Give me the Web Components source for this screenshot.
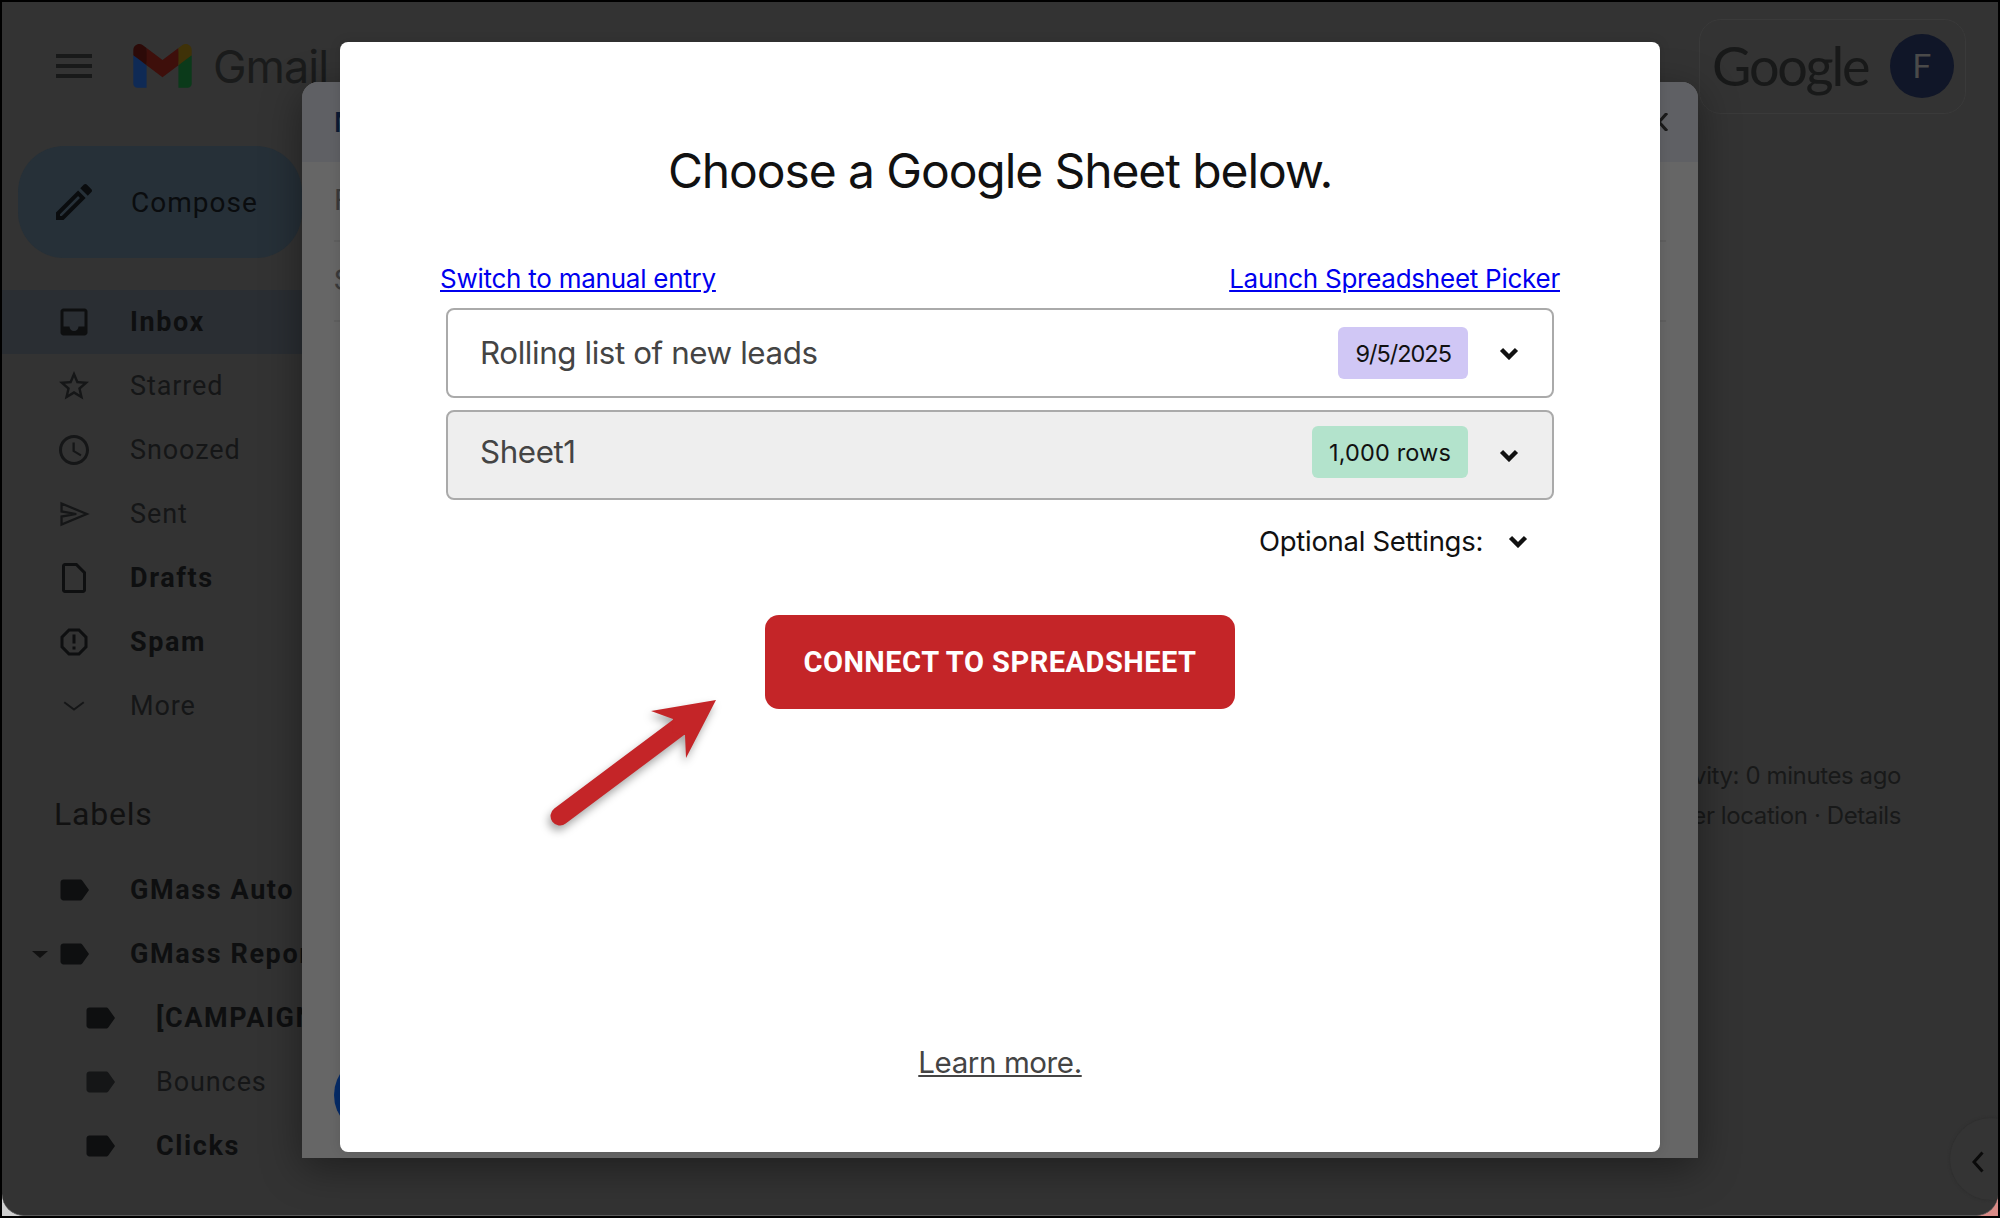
<!DOCTYPE html>
<html lang="en">
  <head>
    <meta charset="UTF-8" />
    <title>Choose a Google Sheet</title>
    <style>
      html, body { margin: 0; height: 100%; }
      body { font-family: "Roboto", "Liberation Sans", sans-serif; background: #000; }
    </style>
  </head>

  <body>
    <mail-window>
      <mail-topbar slot="top"></mail-topbar>
      <mail-sidebar slot="side">
        <nav-item icon="inbox" active bold>Inbox</nav-item>
        <nav-item icon="star">Starred</nav-item>
        <nav-item icon="clock">Snoozed</nav-item>
        <nav-item icon="sent">Sent</nav-item>
        <nav-item icon="draft" bold>Drafts</nav-item>
        <nav-item icon="spam" bold>Spam</nav-item>
        <nav-item icon="more">More</nav-item>
        <label-heading>Labels</label-heading>
        <nav-item icon="label" bold>GMass Auto</nav-item>
        <nav-item icon="label" bold caret>GMass Reports</nav-item>
        <nav-item icon="label" bold indent>[CAMPAIGNS]</nav-item>
        <nav-item icon="label" indent>Bounces</nav-item>
        <nav-item icon="label" bold indent>Clicks</nav-item>
      </mail-sidebar>
      <mail-activity slot="main"></mail-activity>
      <back-dialog slot="over"></back-dialog>
      <sheet-modal slot="over">
        <picker-row filled="no" tone="purple" track="-1" badge="9/5/2025">Rolling list of new leads</picker-row>
        <picker-row filled="yes" tone="green" track="0.15" badge="1,000 rows">Sheet1</picker-row>
      </sheet-modal>
    </mail-window>

    <script>
      const ICONS = {
        inbox: '<path d="M19 3H5c-1.1 0-2 .9-2 2v14c0 1.1.9 2 2 2h14c1.1 0 2-.9 2-2V5c0-1.1-.9-2-2-2zm0 12h-4c0 1.66-1.34 3-3 3s-3-1.34-3-3H5V5h14v10z"/>',
        star: '<path d="M22 9.24l-7.19-.62L12 2 9.19 8.63 2 9.24l5.46 4.73L5.82 21 12 17.27 18.18 21l-1.63-7.03L22 9.24zM12 15.4l-3.76 2.27 1-4.28-3.32-2.88 4.38-.38L12 6.1l1.71 4.04 4.38.38-3.32 2.88 1 4.28L12 15.4z"/>',
        clock: '<path d="M11.99 2C6.47 2 2 6.48 2 12s4.47 10 9.99 10C17.52 22 22 17.52 22 12S17.52 2 11.99 2zM12 20c-4.42 0-8-3.58-8-8s3.58-8 8-8 8 3.58 8 8-3.58 8-8 8zm.5-13H11v6l5.25 3.15.75-1.23-4.5-2.67z"/>',
        sent: '<path d="M3.700 5L20.500 12 3.700 19v-5.300L13.500 12 3.700 10.300z" fill="none" stroke="currentColor" stroke-width="1.500"/>',
        draft: '<path d="M14 2H6c-1.1 0-1.99.9-1.99 2L4 20c0 1.1.89 2 1.99 2H18c1.1 0 2-.9 2-2V8l-6-6zM6 20V4h7.17L18 8.83V20H6z"/>',
        spam: '<path d="M15.73 3H8.27L3 8.27v7.46L8.27 21h7.46L21 15.73V8.27L15.73 3zM19 14.9L14.9 19H9.1L5 14.9V9.1L9.1 5h5.8L19 9.1v5.8z"/><path d="M11 7h2v6h-2zM11 15h2v2h-2z"/>',
        more: '<path d="M5.500 9.500L12 14.300l6.500-4.800" fill="none" stroke="currentColor" stroke-width="1.300"/>',
        label: '<path d="M17.63 5.84C17.27 5.33 16.67 5 16 5L5 5.01C3.9 5.01 3 5.9 3 7v10c0 1.1.9 1.99 2 1.99L16 19c.67 0 1.27-.33 1.63-.84L22 12l-4.37-6.16z"/>',
        pencil: '<path d="M3 17.25V21h3.75L17.81 9.94l-3.75-3.75L3 17.25zM5.92 19H5v-.92l9.06-9.06.92.92L5.92 19zM20.71 5.63l-2.34-2.34c-.39-.39-1.02-.39-1.41 0l-1.83 1.83 3.75 3.75 1.83-1.83c.39-.39.39-1.02 0-1.41z"/>'
      };

      const svgIcon = (name, size) =>
        `<svg width="${size}" height="${size}" viewBox="0 0 24 24" fill="currentColor">${ICONS[name]}</svg>`;

      const chevron = `<svg width="20" height="13" viewBox="0 0 20 13"><path d="M2.5 2.5L10 10l7.5-7.5" fill="none" stroke="#111" stroke-width="4.4"/></svg>`;

      class ShadowBase extends HTMLElement {
        constructor() {
          super();
          this.attachShadow({ mode: "open" });
        }
        connectedCallback() {
          this.shadowRoot.innerHTML = this.render();
        }
      }

      class MailWindow extends ShadowBase {
        render() {
          return `<style>
            :host { display: block; box-sizing: border-box; height: 1218px; padding: 2px; background: linear-gradient(90deg, #cfcfcf 50%, #d98a86 50%); background-clip: content-box; outline: 2px solid #000; outline-offset: -2px; position: relative; overflow: hidden; }
            .app { height: 100%; background: #333; border-radius: 0 0 22px 22px; border-bottom: 1px solid #5a5a5a; box-sizing: border-box; display: flex; flex-direction: column; overflow: hidden; position: relative; }
            .body { flex: 1; display: flex; min-height: 0; }
            .collapse { position: absolute; left: 1948px; top: 1116px; width: 82px; height: 82px; border-radius: 50%; background: #343434; box-shadow: 0 0 3px #2c2c2c; }
            .collapse svg { position: absolute; left: 22px; top: 33px; }
          </style>
          <div class="app">
            <slot name="top"></slot>
            <div class="body"><slot name="side"></slot><slot name="main"></slot></div>
            <div class="collapse"><svg width="12" height="22" viewBox="0 0 12 22"><path d="M10.5 1.5L2 11l8.500 9.500" fill="none" stroke="#0a0a0a" stroke-width="3"/></svg></div>
          </div>
          <slot name="over"></slot>`;
        }
      }

      class MailTopbar extends ShadowBase {
        render() {
          return `<style>
            :host { display: flex; align-items: center; height: 128px; padding: 0 32px 0 54px; color: #1a1b1b; flex: none; }
            .burger { width: 36px; height: 24px; display: flex; flex-direction: column; justify-content: space-between; margin-right: 41px; }
            .burger i { display: block; height: 4px; background: #181919; }
            .logo { margin-right: 21px; display: block; }
            .gmail { font: 400 45px "Inter", "Liberation Sans", sans-serif; letter-spacing: -1px; }
            .pill { margin-left: auto; width: 267px; height: 95px; box-sizing: border-box; border: 1px solid #3a3a3a; border-radius: 22px; display: flex; align-items: center; padding: 0 11px 0 12px; justify-content: space-between; }
            .google { font: 400 54px "Lato", "Liberation Sans", sans-serif; letter-spacing: -2.2px; color: #181919; line-height: 1; }
            .avatar { width: 64px; height: 64px; border-radius: 50%; background: #101628; color: #4a4a4a; display: flex; align-items: center; justify-content: center; font: 400 34px "Roboto", sans-serif; }
          </style>
          <div class="burger"><i></i><i></i><i></i></div>
          <svg class="logo" width="59" height="44" viewBox="0 0 256 193">
            <path fill="#0f2a55" d="M58.182 192.05V93.14L27.507 65.077 0 49.504v125.091c0 9.658 7.825 17.455 17.455 17.455h40.727Z"/>
            <path fill="#0b3a1a" d="M197.818 192.05h40.727c9.659 0 17.455-7.826 17.455-17.455V49.505l-31.156 17.837-27.026 25.798v98.91Z"/>
            <path fill="#3e0f0b" d="m58.182 93.14-4.174-38.647 4.174-36.989L128 69.868l69.818-52.364 4.669 34.992-4.669 40.644L128 145.504z"/>
            <path fill="#3f3208" d="M197.818 17.504V93.14L256 49.504V26.231c0-21.585-24.64-33.89-41.89-20.945l-16.292 12.218Z"/>
            <path fill="#2c0a08" d="m0 49.504 26.759 20.07L58.182 93.14V17.504L41.89 5.286C24.61-7.66 0 4.646 0 26.23v23.273Z"/>
          </svg>
          <span class="gmail">Gmail</span>
          <div class="pill"><span class="google">Google</span><span class="avatar">F</span></div>`;
        }
      }

      class MailSidebar extends ShadowBase {
        render() {
          return `<style>
            :host { display: block; width: 300px; flex: none; padding-top: 16px; }
            .compose { margin: 0 0 32px 16px; width: 284px; height: 112px; border-radius: 46px; background: #263038; display: flex; align-items: center; padding-left: 32px; box-sizing: border-box; color: #0a0c0e; }
            .compose svg { margin: 0 33px 0 0; flex: none; }
            .compose span { font: 400 28px "Roboto", sans-serif; letter-spacing: 1px; }
          </style>
          <div class="compose">${svgIcon("pencil", 48)}<span>Compose</span></div>
          <slot></slot>`;
        }
      }

      class NavItem extends ShadowBase {
        render() {
          const indent = this.hasAttribute("indent");
          const bold = this.hasAttribute("bold");
          return `<style>
            :host { display: flex; align-items: center; height: 64px; padding-left: ${indent ? 80 : 54}px; color: ${bold ? "#0e0f10" : "#151617"}; background: ${this.hasAttribute("active") ? "#2a2e33" : "none"}; position: relative; white-space: nowrap; }
            svg.i { flex: none; margin-right: 38px; }
            span { font: ${bold ? 700 : 400} 27px "Roboto", sans-serif; letter-spacing: ${bold ? 1.6 : .9}px; }
            .caret { position: absolute; left: 30px; top: 29px; width: 0; height: 0; border: 8px solid transparent; border-top: 7px solid #111; border-bottom: 0; }
          </style>
          ${this.hasAttribute("caret") ? '<i class="caret"></i>' : ""}
          ${svgIcon(this.getAttribute("icon"), 36).replace("<svg", '<svg class="i"')}<span><slot></slot></span>`;
        }
      }

      class LabelHeading extends ShadowBase {
        render() {
          return `<style>
            :host { display: block; margin: 56px 0 24px 52px; height: 40px; font: 400 32px/40px "Roboto", sans-serif; letter-spacing: .8px; color: #111; }
          </style><slot></slot>`;
        }
      }

      class MailActivity extends ShadowBase {
        render() {
          return `<style>
            :host { display: block; flex: 1; padding: 626px 97px 0 0; text-align: right; font: 400 24px/40px "Inter", "Roboto", sans-serif; letter-spacing: -.4px; color: #181919; white-space: nowrap; overflow: hidden; }
          </style>
          <div>Last account activity: 0 minutes ago</div>
          <div>Currently being used in 1 other location · Details</div>`;
        }
      }

      // dialog sitting under the sheet modal, only its edges show
      class BackDialog extends ShadowBase {
        render() {
          return `<style>
            :host { position: absolute; left: 302px; top: 82px; width: 1396px; height: 1076px; background: #666; border-radius: 16px 16px 0 0; box-shadow: 0 10px 40px rgba(0,0,0,.4); overflow: hidden; display: block; }
            .head { height: 80px; background: #5f6064; padding-left: 32px; display: flex; align-items: center; justify-content: space-between; font: 500 28px "Roboto", sans-serif; color: #0b1a33; }
            .x { margin-right: 30px; }
            .line { margin: 0 32px; height: 80px; border-bottom: 2px solid #5f5f5f; box-sizing: border-box; color: #3a3a3a; font: 400 29px/76px "Roboto", sans-serif; }
            .dot { position: absolute; left: 32px; top: 973px; width: 80px; height: 80px; border-radius: 50%; background: #052a66; }
          </style>
          <div class="head"><span>M</span><svg class="x" width="18" height="18" viewBox="0 0 18 18"><path d="M1 0l16 18M17 0L1 18" stroke="#1a1a1a" stroke-width="3"/></svg></div>
          <div class="line">F</div>
          <div class="line">S</div>
          <div class="dot"></div>`;
        }
      }

      class SheetModal extends ShadowBase {
        render() {
          return `<style>
            :host { position: absolute; left: 340px; top: 42px; width: 1320px; height: 1110px; box-sizing: border-box; background: #fff; border-radius: 8px; padding: 99px 100px 70px; display: flex; flex-direction: column; box-shadow: 0 0 12px rgba(0,0,0,.12); font-family: "Inter", "Liberation Sans", sans-serif; }
            h1 { margin: 0; font: 400 48px/60px "Inter", sans-serif; letter-spacing: -1.1px; text-align: center; color: #111; }
            .links { margin-top: 61px; display: flex; justify-content: space-between; font-size: 26px; line-height: 34px; letter-spacing: -.25px; }
            a { color: #0000ee; text-decoration: underline; }
            .rows { margin: 12px 6px 0 6px; display: flex; flex-direction: column; gap: 12px; }
            .opt { margin-top: 24px; height: 34px; display: flex; justify-content: flex-end; align-items: center; gap: 25px; padding-right: 32px; font-size: 27.500px; letter-spacing: -.3px; color: #111; }
            .go { align-self: center; margin-top: 57px; width: 470px; height: 94px; border: 0; border-radius: 14px; background: #c42528; color: #fff; font: 700 29px "Roboto", sans-serif; letter-spacing: .5px; padding-bottom: 2px; }
            .learn { margin-top: auto; text-align: center; line-height: 40px; font-size: 29.500px; letter-spacing: -.4px; }
            .learn a { color: #444; }
            .arrow { position: absolute; left: 200px; top: 648px; filter: drop-shadow(-2px 5px 4px rgba(0,0,0,.35)); }
          </style>
          <h1>Choose a Google Sheet below.</h1>
          <div class="links"><a href="#">Switch to manual entry</a><a href="#">Launch Spreadsheet Picker</a></div>
          <div class="rows"><slot></slot></div>
          <div class="opt"><span>Optional Settings:</span>${chevron}</div>
          <button class="go">CONNECT TO SPREADSHEET</button>
          <div class="learn"><a href="#">Learn more.</a></div>
          <svg class="arrow" width="190" height="150" viewBox="540 690 190 150">
            <path d="M560 816L679 727" stroke="#c42528" stroke-width="19" stroke-linecap="round" fill="none"/>
            <path d="M716 700L651 711L673 719L672 732L685 735L686 758Z" fill="#c42528"/>
          </svg>`;
        }
      }

      class PickerRow extends ShadowBase {
        render() {
          const filled = this.getAttribute("filled") === "yes";
          const tone = this.getAttribute("tone") === "green" ? "#b3e3cc" : "#d0c7f5";
          return `<style>
            :host { display: flex; align-items: center; height: 90px; box-sizing: border-box; border: 2px solid #aaa; border-radius: 8px; background: ${filled ? "#eee" : "#fff"}; padding: 0 33px 0 32px; }
            .name { flex: 1; font: 400 31.300px "Inter", sans-serif; letter-spacing: -.4px; color: #444; margin-bottom: ${filled ? 6 : 0}px; }
            .badge { height: 52px; padding: 0 17px; border-radius: 6px; background: ${tone}; color: #111; display: flex; align-items: center; font: 400 23.500px "Inter", sans-serif; letter-spacing: ${this.getAttribute("track")}px; margin: 0 31px ${filled ? 6 : 0}px 0; }
            svg { margin-top: 1px; }
          </style>
          <span class="name"><slot></slot></span>
          <span class="badge">${this.getAttribute("badge")}</span>${chevron}`;
        }
      }

      customElements.define("mail-window", MailWindow);
      customElements.define("mail-topbar", MailTopbar);
      customElements.define("mail-sidebar", MailSidebar);
      customElements.define("nav-item", NavItem);
      customElements.define("label-heading", LabelHeading);
      customElements.define("mail-activity", MailActivity);
      customElements.define("back-dialog", BackDialog);
      customElements.define("sheet-modal", SheetModal);
      customElements.define("picker-row", PickerRow);
    </script>
  </body>
</html>
